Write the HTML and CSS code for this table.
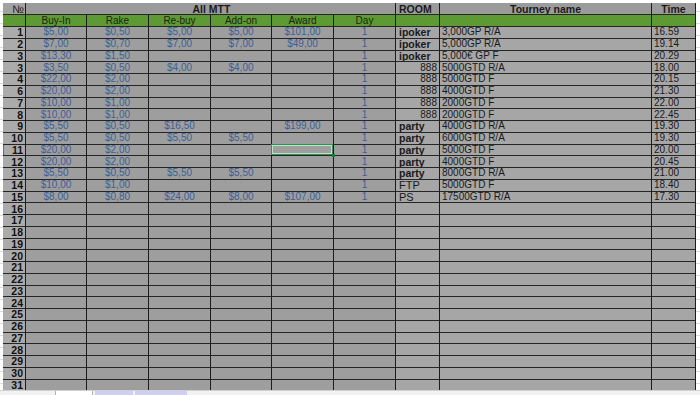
FILE: index.html
```html
<!DOCTYPE html>
<html>
<head>
<meta charset="utf-8">
<link rel="stylesheet" href="styles.css">
</head>
<body>
<div class="sheet">
<div class="grid">
<div class="h rhh">№</div><div class="h span">All MTT</div><div class="h hl">ROOM</div><div class="h">Tourney name</div><div class="h">Time</div>
<div class="g"></div><div class="g">Buy-In</div><div class="g">Rake</div><div class="g">Re-buy</div><div class="g">Add-on</div><div class="g">Award</div><div class="g">Day</div><div class="g"></div><div class="g"></div><div class="g"></div>

<div class="rh">1</div><div class="m">$5,00</div><div class="m">$0,50</div><div class="m">$5,00</div><div class="m">$5,00</div><div class="m">$101,00</div><div class="m">1</div><div class="rm b">ipoker</div><div class="rm">3,000GP R/A</div><div class="rm">16.59</div>
<div class="rh">2</div><div class="m">$7,00</div><div class="m">$0,70</div><div class="m">$7,00</div><div class="m">$7,00</div><div class="m">$49,00</div><div class="m">1</div><div class="rm b">ipoker</div><div class="rm">5,000GP R/A</div><div class="rm">19.14</div>
<div class="rh">3</div><div class="m">$13,30</div><div class="m">$1,50</div><div class="m"></div><div class="m"></div><div class="m"></div><div class="m">1</div><div class="rm b">ipoker</div><div class="rm">5,000€ GP F</div><div class="rm">20.29</div>
<div class="rh">3</div><div class="m">$3,50</div><div class="m">$0,50</div><div class="m">$4,00</div><div class="m">$4,00</div><div class="m"></div><div class="m">1</div><div class="rm r">888</div><div class="rm">5000GTD R/A</div><div class="rm">18.00</div>
<div class="rh">4</div><div class="m">$22,00</div><div class="m">$2,00</div><div class="m"></div><div class="m"></div><div class="m"></div><div class="m">1</div><div class="rm r">888</div><div class="rm">5000GTD F</div><div class="rm">20.15</div>
<div class="rh">6</div><div class="m">$20,00</div><div class="m">$2,00</div><div class="m"></div><div class="m"></div><div class="m"></div><div class="m">1</div><div class="rm r">888</div><div class="rm">4000GTD F</div><div class="rm">21.30</div>
<div class="rh">7</div><div class="m">$10,00</div><div class="m">$1,00</div><div class="m"></div><div class="m"></div><div class="m"></div><div class="m">1</div><div class="rm r">888</div><div class="rm">2000GTD F</div><div class="rm">22.00</div>
<div class="rh">8</div><div class="m">$10,00</div><div class="m">$1,00</div><div class="m"></div><div class="m"></div><div class="m"></div><div class="m">1</div><div class="rm r">888</div><div class="rm">2000GTD F</div><div class="rm">22.45</div>
<div class="rh">9</div><div class="m">$5,50</div><div class="m">$0,50</div><div class="m">$16,50</div><div class="m"></div><div class="m">$199,00</div><div class="m">1</div><div class="rm b">party</div><div class="rm">4000GTD R/A</div><div class="rm">19.30</div>
<div class="rh">10</div><div class="m">$5,50</div><div class="m">$0,50</div><div class="m">$5,50</div><div class="m">$5,50</div><div class="m"></div><div class="m">1</div><div class="rm b">party</div><div class="rm">6000GTD R/A</div><div class="rm">19.30</div>
<div class="rh sel-row">11</div><div class="m">$20,00</div><div class="m">$2,00</div><div class="m"></div><div class="m"></div><div class="m sel"></div><div class="m">1</div><div class="rm b">party</div><div class="rm">5000GTD F</div><div class="rm">20.00</div>
<div class="rh">12</div><div class="m">$20,00</div><div class="m">$2,00</div><div class="m"></div><div class="m"></div><div class="m"></div><div class="m">1</div><div class="rm b">party</div><div class="rm">4000GTD F</div><div class="rm">20.45</div>
<div class="rh">13</div><div class="m">$5,50</div><div class="m">$0,50</div><div class="m">$5,50</div><div class="m">$5,50</div><div class="m"></div><div class="m">1</div><div class="rm b">party</div><div class="rm">8000GTD R/A</div><div class="rm">21.00</div>
<div class="rh">14</div><div class="m">$10,00</div><div class="m">$1,00</div><div class="m"></div><div class="m"></div><div class="m"></div><div class="m">1</div><div class="rm big">FTP</div><div class="rm">5000GTD F</div><div class="rm">18.40</div>
<div class="rh">15</div><div class="m">$8,00</div><div class="m">$0,80</div><div class="m">$24,00</div><div class="m">$8,00</div><div class="m">$107,00</div><div class="m">1</div><div class="rm big">PS</div><div class="rm">17500GTD R/A</div><div class="rm">17.30</div>
<div class="rh">16</div><div class="m"></div><div class="m"></div><div class="m"></div><div class="m"></div><div class="m"></div><div class="m"></div><div class="rm"></div><div class="rm"></div><div class="rm"></div>
<div class="rh">17</div><div class="m"></div><div class="m"></div><div class="m"></div><div class="m"></div><div class="m"></div><div class="m"></div><div class="rm"></div><div class="rm"></div><div class="rm"></div>
<div class="rh">18</div><div class="m"></div><div class="m"></div><div class="m"></div><div class="m"></div><div class="m"></div><div class="m"></div><div class="rm"></div><div class="rm"></div><div class="rm"></div>
<div class="rh">19</div><div class="m"></div><div class="m"></div><div class="m"></div><div class="m"></div><div class="m"></div><div class="m"></div><div class="rm"></div><div class="rm"></div><div class="rm"></div>
<div class="rh">20</div><div class="m"></div><div class="m"></div><div class="m"></div><div class="m"></div><div class="m"></div><div class="m"></div><div class="rm"></div><div class="rm"></div><div class="rm"></div>
<div class="rh">21</div><div class="m"></div><div class="m"></div><div class="m"></div><div class="m"></div><div class="m"></div><div class="m"></div><div class="rm"></div><div class="rm"></div><div class="rm"></div>
<div class="rh">22</div><div class="m"></div><div class="m"></div><div class="m"></div><div class="m"></div><div class="m"></div><div class="m"></div><div class="rm"></div><div class="rm"></div><div class="rm"></div>
<div class="rh">23</div><div class="m"></div><div class="m"></div><div class="m"></div><div class="m"></div><div class="m"></div><div class="m"></div><div class="rm"></div><div class="rm"></div><div class="rm"></div>
<div class="rh">24</div><div class="m"></div><div class="m"></div><div class="m"></div><div class="m"></div><div class="m"></div><div class="m"></div><div class="rm"></div><div class="rm"></div><div class="rm"></div>
<div class="rh">25</div><div class="m"></div><div class="m"></div><div class="m"></div><div class="m"></div><div class="m"></div><div class="m"></div><div class="rm"></div><div class="rm"></div><div class="rm"></div>
<div class="rh">26</div><div class="m"></div><div class="m"></div><div class="m"></div><div class="m"></div><div class="m"></div><div class="m"></div><div class="rm"></div><div class="rm"></div><div class="rm"></div>
<div class="rh">27</div><div class="m"></div><div class="m"></div><div class="m"></div><div class="m"></div><div class="m"></div><div class="m"></div><div class="rm"></div><div class="rm"></div><div class="rm"></div>
<div class="rh">28</div><div class="m"></div><div class="m"></div><div class="m"></div><div class="m"></div><div class="m"></div><div class="m"></div><div class="rm"></div><div class="rm"></div><div class="rm"></div>
<div class="rh">29</div><div class="m"></div><div class="m"></div><div class="m"></div><div class="m"></div><div class="m"></div><div class="m"></div><div class="rm"></div><div class="rm"></div><div class="rm"></div>
<div class="rh">30</div><div class="m"></div><div class="m"></div><div class="m"></div><div class="m"></div><div class="m"></div><div class="m"></div><div class="rm"></div><div class="rm"></div><div class="rm"></div>
<div class="rh">31</div><div class="m"></div><div class="m"></div><div class="m"></div><div class="m"></div><div class="m"></div><div class="m"></div><div class="rm"></div><div class="rm"></div><div class="rm"></div>
</div>
</div>
<div class="tabs">
<div class="tab-first"></div>
<div class="tab tab-a"></div>
<div class="tab tab-b"></div>
</div>
</body>
</html>
```

FILE: styles.css
```css
body {
  margin: 0;
  width: 700px;
  height: 395px;
  overflow: hidden;
  background: #ffffff;
  font-family: "Liberation Sans", Arial, sans-serif;
  font-size: 10px;
}

.sheet {
  height: 390px;
  padding: 3px 0 0 3px;
  box-sizing: border-box;
  overflow: hidden;
  background-color: #ffffff;
  background-image: repeating-linear-gradient(to bottom, transparent 0, transparent 11px, #dcdcdc 11px, #dcdcdc 12px);
}

.grid {
  display: grid;
  grid-template-columns: 23px 61px 62px 62px 61px 62px 62px 44px 212px 44px;
  grid-template-rows: 12px 12px repeat(31, 11.75px);
  width: 693px;
}

.grid > div {
  box-sizing: border-box;
  border-right: 1px solid #1c1c1c;
  border-bottom: 1px solid #262626;
  display: flex;
  align-items: center;
  justify-content: center;
  white-space: nowrap;
  overflow: hidden;
  line-height: 10px;
  background: #9e9e9e;
  color: #1a1a1a;
}

.grid > .h {
  background: #9b9b9b;
  font-weight: bold;
  font-size: 10.5px;
  color: #1a1a1a;
}

.grid > .rhh {
  justify-content: flex-end;
  padding-right: 1px;
  font-weight: normal;
  font-size: 11px;
  background: #a2a2a2;
}

.grid > .span {
  grid-column: 2 / 8;
  padding-left: 2px;
}

.grid > .hl {
  justify-content: flex-start;
  padding-left: 3px;
}

.grid > .g {
  background: #5e9a34;
  color: #1a2410;
}

.grid > .rh {
  justify-content: flex-end;
  padding-right: 2px;
  font-weight: bold;
  font-size: 10.5px;
  background: #ababab;
  color: #111111;
}

.grid > .sel-row {
  box-shadow: inset 1px 0 0 #1f9a48;
}

.grid > .m {
  color: #3d5e98;
}

.grid > .rm {
  justify-content: flex-start;
  padding-left: 2px;
  background: #a6a6a6;
  color: #1a1a1a;
}

.grid > .b {
  font-weight: bold;
  font-size: 10.5px;
  padding-left: 3px;
}

.grid > .big {
  font-size: 11px;
  padding-left: 3px;
}

.grid > .r {
  justify-content: flex-end;
  padding-right: 2px;
}

.grid > .sel {
  position: relative;
  overflow: visible;
}

.sel::after {
  content: "";
  position: absolute;
  left: -1px;
  top: -1px;
  right: 0;
  bottom: 0;
  border: 1px solid #2f8f55;
  box-shadow: inset 0 0 0 1px #b9e6c4;
}

.sel::before {
  content: "";
  position: absolute;
  right: -2px;
  bottom: -2px;
  width: 3px;
  height: 3px;
  background: #217346;
  z-index: 2;
}

.tabs {
  height: 5px;
  display: flex;
  background: #f2f2f2;
  border-top: 1px solid #d0d0d0;
  box-sizing: border-box;
  padding-left: 55px;
  gap: 2px;
}

.tab-first {
  width: 36px;
  background: #ffffff;
  border-left: 1px solid #b0b0b0;
  border-right: 1px solid #b0b0b0;
}

.tab {
  background: #cfcff5;
}

.tab-a {
  width: 38px;
}

.tab-b {
  width: 52px;
}
```
